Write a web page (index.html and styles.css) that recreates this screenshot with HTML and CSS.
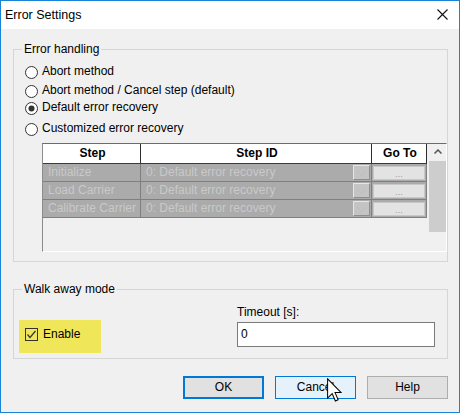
FILE: index.html
```html
<!DOCTYPE html>
<html>
<head>
<meta charset="utf-8">
<link rel="stylesheet" href="styles.css">
</head>
<body>
<div class="window">
  <div class="titlebar">
    <span class="title">Error Settings</span>
    <svg class="close" width="11" height="11" viewBox="0 0 11 11"><path d="M0.5 0.5 L10.5 10.5 M10.5 0.5 L0.5 10.5" stroke="#111" stroke-width="1.1" fill="none"/></svg>
  </div>
  <div class="client">
    <fieldset class="group group-errors">
      <legend>Error handling</legend>
      <div class="radios">
        <div class="radio r1"><svg class="rb" width="13" height="13" viewBox="0 0 13 13"><circle cx="6.5" cy="6.5" r="6" fill="#fff" stroke="#333"/></svg><span>Abort method</span></div>
        <div class="radio r2"><svg class="rb" width="13" height="13" viewBox="0 0 13 13"><circle cx="6.5" cy="6.5" r="6" fill="#fff" stroke="#333"/></svg><span>Abort method / Cancel step (default)</span></div>
        <div class="radio r3"><svg class="rb" width="13" height="13" viewBox="0 0 13 13"><circle cx="6.5" cy="6.5" r="6" fill="#fff" stroke="#333"/><circle cx="6.5" cy="6.5" r="3" fill="#333"/></svg><span>Default error recovery</span></div>
        <div class="radio r4"><svg class="rb" width="13" height="13" viewBox="0 0 13 13"><circle cx="6.5" cy="6.5" r="6" fill="#fff" stroke="#333"/></svg><span>Customized error recovery</span></div>
      </div>
      <div class="gridbox">
        <div class="grid">
          <div class="hcell">Step</div>
          <div class="hcell">Step ID</div>
          <div class="hcell">Go To</div>

          <div class="cell">Initialize</div>
          <div class="cell idcell"><span>0: Default error recovery</span><span class="dd"><svg width="9" height="5" viewBox="0 0 9 5"><path d="M0.5 0.5 L4.5 4.5 L8.5 0.5" stroke="#bdbdbd" fill="none"/></svg></span></div>
          <div class="cell gocell"><span class="gobtn">...</span></div>

          <div class="cell">Load Carrier</div>
          <div class="cell idcell"><span>0: Default error recovery</span><span class="dd"><svg width="9" height="5" viewBox="0 0 9 5"><path d="M0.5 0.5 L4.5 4.5 L8.5 0.5" stroke="#bdbdbd" fill="none"/></svg></span></div>
          <div class="cell gocell"><span class="gobtn">...</span></div>

          <div class="cell">Calibrate Carrier</div>
          <div class="cell idcell"><span>0: Default error recovery</span><span class="dd"><svg width="9" height="5" viewBox="0 0 9 5"><path d="M0.5 0.5 L4.5 4.5 L8.5 0.5" stroke="#bdbdbd" fill="none"/></svg></span></div>
          <div class="cell gocell"><span class="gobtn">...</span></div>
        </div>
        <div class="vscroll">
          <div class="sarrow"><svg width="8" height="5" viewBox="0 0 8 5"><path d="M0.5 4.5 L4 1 L7.5 4.5" stroke="#555" stroke-width="1.5" fill="none"/></svg></div>
          <div class="sthumb"></div>
        </div>
      </div>
    </fieldset>

    <fieldset class="group group-walk">
      <legend>Walk away mode</legend>
      <div class="walkrow">
        <div class="enable">
          <svg class="cb" width="13" height="13" viewBox="0 0 13 13"><rect x="0.5" y="0.5" width="12" height="12" fill="none" stroke="#333"/><path d="M2.5 6.5 L5 9.5 L10.5 3" stroke="#333" stroke-width="1.2" fill="none"/></svg>
          <span>Enable</span>
        </div>
        <div class="timeout">
          <div class="tlabel">Timeout [s]:</div>
          <div class="tinput">0</div>
        </div>
      </div>
    </fieldset>

    <div class="buttons">
      <div class="btn btn-default">OK</div>
      <div class="btn btn-hover">Cancel</div>
      <div class="btn">Help</div>
    </div>
  </div>
  <svg class="cursor" width="15" height="25" viewBox="0 0 12.5 20.5"><path d="M0.5 0.5 L0.5 16.5 L4.3 12.8 L7 19 L9.3 18 L6.7 12 L11.8 12 Z" fill="#fff" stroke="#000" stroke-width="0.85" stroke-linejoin="miter"/></svg>
</div>
</body>
</html>
```

FILE: styles.css
```css
* { box-sizing: border-box; }
html, body { margin: 0; padding: 0; background: #ffffff; }
body {
  font-family: "Liberation Sans", Arial, sans-serif;
  font-size: 12px;
  color: #000;
}
.window {
  position: relative;
  width: 460px;
  height: 413px;
  border: 1px solid #1883d7;
  display: flex;
  flex-direction: column;
  background: #f0f0f0;
}
.titlebar {
  height: 28px;
  flex: none;
  background: #fff;
  display: flex;
  align-items: center;
  justify-content: space-between;
  padding: 0 11px 0 4px;
}
.title { font-size: 12.5px; line-height: 15px; color: #000; }
.close { display: block; margin-top: -1px; }

.client {
  flex: 1;
  padding: 13px 11px 0 12px;
  display: flex;
  flex-direction: column;
}
.group {
  margin: 0;
  padding: 0;
  border: 1px solid #d6d6d6;
  min-width: 0;
}
.group legend {
  margin-left: 8px;
  padding: 0 2px;
  line-height: 15px;
  font-size: 12px;
}
.group-errors { padding-bottom: 9px; }
.radios { padding: 7px 0 0 11px; }
.radio {
  display: flex;
  align-items: flex-start;
  height: 14px;
  line-height: 14px;
  white-space: nowrap;
}
.radio .rb { display: block; margin-top: 2px; margin-right: 4px; flex: none; }
.r2 { margin-top: 5px; }
.r3 { margin-top: 3px; }
.r4 { margin-top: 7px; }

.gridbox {
  margin: 8px 0 0 28px;
  height: 109px;
  border-left: 1px solid #8c8c8c;
  border-top: 1px solid #6b6b6b;
  border-right: 1px solid #ffffff;
  border-bottom: 1px solid #ffffff;
  display: flex;
  align-items: flex-start;
  gap: 2px;
}
.grid {
  display: grid;
  grid-template-columns: 98px 231px 55px;
  grid-template-rows: 20px 18px 18px 18px;
  width: 384px;
  flex: none;
}
.hcell {
  background: #fff;
  border-right: 1px solid #2e2e2e;
  border-bottom: 1px solid #3a3a3a;
  font-weight: bold;
  text-align: center;
  line-height: 19px;
  padding-left: 2px;
}
.cell {
  background: #ababab;
  border-right: 1px solid #7f7f7f;
  border-bottom: 1px solid #7f7f7f;
  color: #c9c9c9;
  line-height: 17px;
  padding-left: 5px;
  white-space: nowrap;
  overflow: hidden;
}
.idcell {
  display: flex;
  align-items: flex-start;
  justify-content: space-between;
  padding-right: 1px;
}
.dd {
  flex: none;
  width: 17px;
  height: 15px;
  margin-top: 1px;
  background: #c4c4c4;
  border-top: 1px solid #e6e6e6;
  border-left: 1px solid #e6e6e6;
  border-right: 1px solid #8e8e8e;
  border-bottom: 1px solid #8e8e8e;
  display: flex;
  align-items: flex-end;
  justify-content: center;
  padding-bottom: 3px;
}
.dd svg { display: block; }
.gocell { padding: 2px 1px 0 1px; }
.gobtn {
  display: block;
  height: 14px;
  background: #e3e3e3;
  border: 1px solid #c8c8c8;
  color: #9a9a9a;
  font-size: 9px;
  line-height: 14px;
  text-align: center;
}
.vscroll {
  width: 17px;
  flex: none;
  display: flex;
  flex-direction: column;
}
.sarrow {
  height: 17px;
  display: flex;
  align-items: center;
  justify-content: center;
  padding-bottom: 2px;
}
.sarrow svg { display: block; }
.sthumb { height: 71px; background: #cdcdcd; }

.group-walk { margin-top: 20px; }
.walkrow {
  display: flex;
  align-items: flex-start;
  padding: 8px 12px 5px 5px;
}
.enable {
  margin-top: 15px;
  width: 82px;
  height: 33px;
  background: #f0e65a;
  display: flex;
  align-items: flex-start;
  padding: 8px 0 0 6px;
}
.enable .cb { display: block; flex: none; margin-right: 5px; }
.enable span { line-height: 14px; margin-top: -1px; }
.timeout { margin-left: auto; width: 198px; }
.tlabel { line-height: 14px; }
.tinput {
  margin-top: 3px;
  height: 25px;
  background: #fff;
  border: 1px solid #7a7a7a;
  line-height: 22px;
  padding-left: 3px;
}

.buttons {
  margin-top: 17px;
  display: flex;
  justify-content: flex-end;
  gap: 11px;
}
.btn {
  width: 81px;
  height: 23px;
  background: #e1e1e1;
  border: 1px solid #adadad;
  text-align: center;
  line-height: 21px;
}
.btn-default { border: 2px solid #0078d7; line-height: 19px; }
.btn-hover { background: #e5f1fb; border-color: #0078d7; }

.cursor {
  position: absolute;
  left: 326px;
  top: 377px;
  display: block;
}
```
